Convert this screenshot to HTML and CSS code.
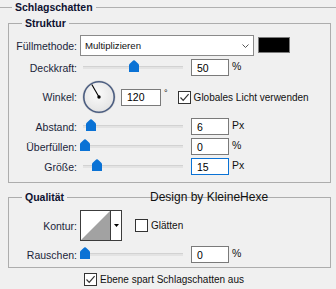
FILE: index.html
```html
<!DOCTYPE html>
<html lang="de">
<head>
<meta charset="utf-8">
<title>Schlagschatten</title>
<link rel="stylesheet" href="styles.css">
</head>
<body>
<fieldset class="panel">
  <legend class="panel-title">Schlagschatten</legend>

  <fieldset class="group">
    <legend class="group-title">Struktur</legend>
    <div class="rows rows-struktur">
      <div class="row row-blend">
        <span class="lbl">Füllmethode:</span>
        <div class="select">
          <span class="select-text">Multiplizieren</span>
          <svg class="chev" width="7" height="4" viewBox="0 0 7 4"><path d="M0.5 0.5 L3.5 3.5 L6.5 0.5" fill="none" stroke="#555" stroke-width="1"/></svg>
        </div>
        <div class="swatch"></div>
      </div>

      <div class="row row-slider">
        <span class="lbl">Deckkraft:</span>
        <div class="slider"><div class="track"></div><svg class="thumb" style="left:49px" width="10" height="12" viewBox="0 0 10 12"><path d="M0 12V5.2Q0 4.4 .7 3.8L4.2 .6Q5 0 5.8 .6L9.3 3.8Q10 4.4 10 5.2V12Z"/></svg></div>
        <div class="num">50</div><span class="unit">%</span>
      </div>

      <div class="row row-angle">
        <span class="lbl">Winkel:</span>
        <svg class="dial" width="34" height="34" viewBox="0 0 34 34">
          <defs>
            <radialGradient id="dg" cx="45%" cy="40%" r="65%">
              <stop offset="0" stop-color="#fbfbfb"/>
              <stop offset="1" stop-color="#e2e2e2"/>
            </radialGradient>
          </defs>
          <circle cx="17" cy="17" r="16.3" fill="none" stroke="#cfcfcf" stroke-width="0.8"/>
          <circle cx="17" cy="17" r="15.2" fill="url(#dg)" stroke="#4b5d80" stroke-width="1.6"/>
          <line x1="17" y1="17" x2="9.8" y2="4.5" stroke="#000" stroke-width="1.1"/>
          <circle cx="17" cy="17" r="1.7" fill="#000"/>
        </svg>
        <div class="num num-wide">120</div><span class="deg">°</span>
        <span class="cb cb-global"><svg width="11" height="11" viewBox="0 0 11 11"><path d="M1.5 5.5 L4.2 8.3 L9.6 2.2" fill="none" stroke="#333" stroke-width="1.2"/></svg></span>
        <span class="cb-label">Globales Licht verwenden</span>
      </div>

      <div class="row row-slider">
        <span class="lbl">Abstand:</span>
        <div class="slider"><div class="track"></div><svg class="thumb" style="left:6px" width="10" height="12" viewBox="0 0 10 12"><path d="M0 12V5.2Q0 4.4 .7 3.8L4.2 .6Q5 0 5.8 .6L9.3 3.8Q10 4.4 10 5.2V12Z"/></svg></div>
        <div class="num">6</div><span class="unit">Px</span>
      </div>

      <div class="row row-slider">
        <span class="lbl">Überfüllen:</span>
        <div class="slider"><div class="track"></div><svg class="thumb" style="left:0px" width="10" height="12" viewBox="0 0 10 12"><path d="M0 12V5.2Q0 4.4 .7 3.8L4.2 .6Q5 0 5.8 .6L9.3 3.8Q10 4.4 10 5.2V12Z"/></svg></div>
        <div class="num">0</div><span class="unit">%</span>
      </div>

      <div class="row row-slider">
        <span class="lbl">Größe:</span>
        <div class="slider"><div class="track"></div><svg class="thumb" style="left:12px" width="10" height="12" viewBox="0 0 10 12"><path d="M0 12V5.2Q0 4.4 .7 3.8L4.2 .6Q5 0 5.8 .6L9.3 3.8Q10 4.4 10 5.2V12Z"/></svg></div>
        <div class="num num-focus">15</div><span class="unit">Px</span>
      </div>
    </div>
  </fieldset>

  <fieldset class="group group-quality">
    <legend class="group-title">Qualität</legend>
    <div class="rows rows-quality">
      <div class="row row-contour">
        <span class="lbl">Kontur:</span>
        <div class="contour">
          <div class="contour-preview">
            <svg width="29" height="29" viewBox="0 0 29 29"><polygon points="0,29 29,0 29,29" fill="#a2a2a2"/></svg>
          </div>
          <div class="contour-drop">
            <svg width="5" height="3" viewBox="0 0 5 3"><polygon points="0,0 5,0 2.5,3" fill="#000"/></svg>
          </div>
        </div>
        <span class="cb cb-smooth"></span>
        <span class="cb-label">Glätten</span>
      </div>

      <div class="row row-slider">
        <span class="lbl">Rauschen:</span>
        <div class="slider"><div class="track"></div><svg class="thumb" style="left:0px" width="10" height="12" viewBox="0 0 10 12"><path d="M0 12V5.2Q0 4.4 .7 3.8L4.2 .6Q5 0 5.8 .6L9.3 3.8Q10 4.4 10 5.2V12Z"/></svg></div>
        <div class="num">0</div><span class="unit">%</span>
      </div>
    </div>
  </fieldset>

  <div class="row row-knockout">
    <span class="cb"><svg width="11" height="11" viewBox="0 0 11 11"><path d="M1.5 5.5 L4.2 8.3 L9.6 2.2" fill="none" stroke="#333" stroke-width="1.2"/></svg></span>
    <span class="cb-label">Ebene spart Schlagschatten aus</span>
  </div>
</fieldset>

<div class="watermark">Design by KleineHexe</div>
</body>
</html>
```

FILE: styles.css
```css
* {
  box-sizing: border-box;
}

html,
body {
  margin: 0;
  padding: 0;
}

body {
  width: 336px;
  height: 289px;
  overflow: hidden;
  position: relative;
  background: #f0f0f0;
  font-family: "Liberation Sans", Arial, sans-serif;
  font-size: 10.5px;
  color: #1a1f3a;
}

.panel {
  margin: 0;
  padding: 0;
  border: 0;
  border-top: 1px solid #b0b0b0;
  min-width: 0;
}

.panel-title {
  margin-left: 12px;
  padding: 0 3px;
  font-weight: bold;
  line-height: 14px;
  color: #0e1230;
}

.group {
  margin: 2px 5px 0 8px;
  padding: 0;
  border: 1px solid #adadad;
  min-width: 0;
}

.group-quality {
  margin-top: 7px;
}

.group-title {
  margin-left: 13px;
  padding: 0 3px;
  font-weight: bold;
  line-height: 14px;
  color: #0e1230;
}

.rows {
  display: flex;
  flex-direction: column;
  gap: 3px;
  padding-left: 5px;
}

.rows-struktur {
  padding-top: 5px;
  padding-bottom: 7px;
}

.rows-quality {
  padding-top: 6px;
  padding-bottom: 4px;
  gap: 5px;
}

.row {
  display: flex;
  align-items: center;
}

.lbl {
  width: 63px;
  margin-right: 3px;
  text-align: right;
  white-space: nowrap;
}

.row-blend {
  height: 21px;
  align-items: stretch;
}

.row-blend .lbl {
  align-self: center;
}

.select {
  width: 174px;
  border: 1px solid #8a8a8a;
  background: #fff;
  display: flex;
  align-items: center;
  justify-content: space-between;
  padding: 0 4px 0 4px;
}

.select-text {
  font-size: 9.6px;
  color: #111;
}

.swatch {
  width: 32px;
  height: 16px;
  margin-left: 4px;
  margin-top: 2px;
  align-self: flex-start;
  background: #000;
  border: 1px solid #7b7b7b;
}

.row-slider {
  height: 17px;
}

.slider {
  position: relative;
  width: 105px;
  height: 17px;
}

.track {
  margin: 7px 2px 0 3px;
  height: 3px;
  background: #e3e3e3;
  border-top: 1px solid #d2d2d2;
}

.thumb {
  position: absolute;
  top: 1px;
  fill: #0a72d5;
}

.num {
  width: 38px;
  height: 17px;
  margin-left: 6px;
  padding-left: 5px;
  display: flex;
  align-items: center;
  background: #fff;
  border: 1px solid #7a7a7a;
  color: #000;
  font-size: 10.5px;
}

.num-focus {
  border-color: #0a72d5;
}

.unit {
  margin-left: 3px;
  align-self: flex-start;
  margin-top: 1px;
  color: #111;
}

.row-angle {
  height: 36px;
}

.dial {
  margin-left: 2px;
  display: block;
}

.row-angle .num {
  width: 40px;
  margin-left: 5px;
}

.deg {
  margin-left: 3px;
  align-self: flex-start;
  margin-top: 9px;
  font-size: 9px;
  color: #111;
}

.cb {
  width: 13px;
  height: 13px;
  border: 1px solid #333;
  background: #fff;
  display: flex;
  align-items: center;
  justify-content: center;
  flex: none;
}

.cb-global {
  margin-left: 10px;
}

.cb-label {
  margin-left: 3px;
  font-size: 10px;
  white-space: nowrap;
  color: #111;
}

.row-contour {
  height: 31px;
}

.contour {
  width: 42px;
  height: 31px;
  display: flex;
  background: #fff;
  border: 1px solid #3c3c3c;
}

.contour-preview {
  width: 29px;
  display: flex;
}

.contour-preview svg {
  display: block;
}

.contour-drop {
  flex: 1;
  display: flex;
  align-items: center;
  justify-content: center;
  border-left: 1px solid #3c3c3c;
}

.cb-smooth {
  margin-left: 13px;
}

.row-knockout {
  height: 13px;
  margin-top: 5px;
  padding-left: 84px;
}

.watermark {
  position: absolute;
  left: 150px;
  top: 190px;
  font-size: 12px;
  line-height: 14px;
  color: #111;
}
```
